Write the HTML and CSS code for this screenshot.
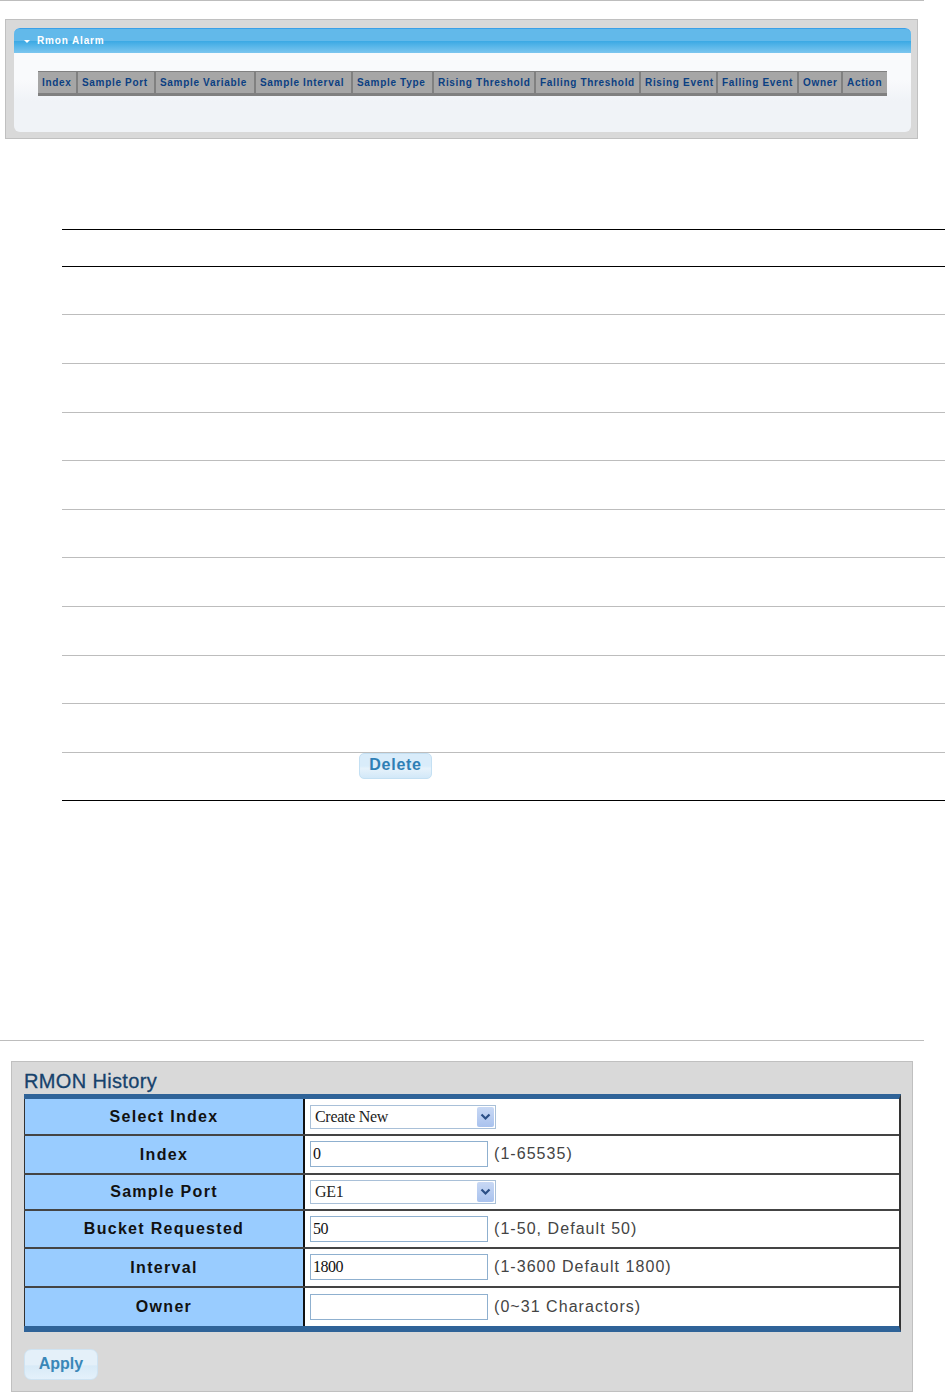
FILE: index.html
```html
<!DOCTYPE html>
<html lang="en">
<head>
<meta charset="utf-8">
<title>RMON</title>
<link rel="stylesheet" href="styles.css">
</head>
<body>
<div class="page">
  <div class="hr"></div>
  <section class="alarm">
    <div class="alarm-inner">
      <div class="alarm-head"><span class="tri"></span><span>Rmon Alarm</span></div>
      <div class="alarm-cols">
        <div>Index</div><div>Sample Port</div><div>Sample Variable</div><div>Sample Interval</div><div>Sample Type</div><div>Rising Threshold</div><div>Falling Threshold</div><div>Rising Event</div><div>Falling Event</div><div>Owner</div><div>Action</div>
      </div>
    </div>
  </section>

  <div class="ruled">
    <div class="ln head"></div>
    <div class="ln dark r48"></div>
    <div class="ln r49"></div>
    <div class="ln r49"></div>
    <div class="ln r48"></div>
    <div class="ln r49"></div>
    <div class="ln r48"></div>
    <div class="ln r49"></div>
    <div class="ln r49"></div>
    <div class="ln r48"></div>
    <div class="ln r49"></div>
    <div class="ln r48 last"><button class="btn-del" type="button">Delete</button></div>
  </div>

  <div class="hr hr2"></div>

  <section class="history">
    <h1>RMON History</h1>
    <div class="form">
      <div class="f-row h1"><div class="lab">Select Index</div><div class="val">
        <div class="sel"><span>Create New</span><span class="arrow"><svg width="15" height="19" viewBox="0 0 15 19"><path d="M3.5 7.5 7.5 11.5 11.5 7.5" fill="none" stroke="#2b4f86" stroke-width="2.2"/></svg></span></div>
      </div></div>
      <div class="f-row h2"><div class="lab">Index</div><div class="val">
        <input class="txt" type="text" value="0"><span class="hint">(1-65535)</span>
      </div></div>
      <div class="f-row h3"><div class="lab">Sample Port</div><div class="val">
        <div class="sel"><span>GE1</span><span class="arrow"><svg width="15" height="19" viewBox="0 0 15 19"><path d="M3.5 7.5 7.5 11.5 11.5 7.5" fill="none" stroke="#2b4f86" stroke-width="2.2"/></svg></span></div>
      </div></div>
      <div class="f-row h2"><div class="lab">Bucket Requested</div><div class="val">
        <input class="txt" type="text" value="50"><span class="hint">(1-50, Default 50)</span>
      </div></div>
      <div class="f-row h2"><div class="lab">Interval</div><div class="val">
        <input class="txt" type="text" value="1800"><span class="hint">(1-3600 Default 1800)</span>
      </div></div>
      <div class="f-row h4 end"><div class="lab">Owner</div><div class="val">
        <input class="txt" type="text" value=""><span class="hint">(0~31 Charactors)</span>
      </div></div>
    </div>
    <button class="btn-apply" type="button">Apply</button>
  </section>
</div>
</body>
</html>
```

FILE: styles.css
```css
html, body { margin: 0; padding: 0; background: #fff; }
body { width: 945px; height: 1392px; overflow: hidden; font-family: "Liberation Sans", Arial, sans-serif; }
.page { display: flex; flex-direction: column; align-items: flex-start; }

.hr { width: 924px; height: 1px; background: #bdbdbd; flex: none; }
.hr2 { margin-top: 239px; }

.alarm { box-sizing: border-box; width: 913px; height: 120px; margin: 18px 0 0 5px; padding: 8px 6px 6px 8px; background: #d9d9d9; border: 1px solid #c0c0c0; }
.alarm-inner { height: 104px; box-sizing: border-box; border-radius: 6px; background: linear-gradient(#f9fafc 0, #f9fafc 50%, #f0f3f7 70%, #f0f3f7 100%); }
.alarm-head { box-sizing: border-box; height: 25px; padding: 0 0 0 10px; display: flex; align-items: flex-start; gap: 7px; border-radius: 6px 6px 0 0; border-top: 1px solid #3aa0e8; background: linear-gradient(#62b9ea 0, #62b9ea 12px, #3aa9e4 12px, #7cc6ef 100%); color: #fff; font-size: 10px; font-weight: bold; letter-spacing: .85px; line-height: 23px; }
.tri { width: 0; height: 0; margin-top: 11px; border-left: 3px solid transparent; border-right: 3px solid transparent; border-top: 3px solid #fff; }
.alarm-cols { display: grid; grid-template-columns: 40px 78px 100px 97px 81px 102px 105px 77px 81px 44px 44px; width: 849px; box-sizing: border-box; margin: 18px 0 0 24px; background: #808080; border-top: 1px solid #808080; border-bottom: 3px solid #808080; }
.alarm-cols > div { box-sizing: border-box; height: 21px; padding-left: 4px; background: #a6a6a6; border-right: 2px solid #808080; color: #0b3f82; font-size: 10px; font-weight: bold; letter-spacing: .68px; line-height: 21px; white-space: nowrap; overflow: hidden; }
.alarm-cols > div:first-child { border-left: 0; }
.alarm-cols > div:last-child { border-right: 0; }

.ruled { width: 883px; margin: 90px 0 0 62px; }
.ln { box-sizing: border-box; border-top: 1px solid #bdbdbd; }
.head { height: 37px; border-top-color: #000; }
.dark { border-top-color: #000; }
.r48 { height: 48px; }
.r49 { height: 49px; }
.last { height: 49px; border-bottom: 1px solid #000; padding-left: 297px; }

.btn-del { display: block; box-sizing: border-box; width: 73px; height: 26px; padding: 0 0 2px; border: 1px solid #c4e0f3; border-radius: 5px; background: linear-gradient(#d9ecfa 0, #d9ecfa 50%, #e6f2fb 60%, #d2e8f8 100%); color: #2f7fb5; font: bold 16px/22px "Liberation Sans", Arial, sans-serif; letter-spacing: .75px; }

.history { box-sizing: border-box; width: 902px; height: 331px; margin: 20px 0 0 11px; padding: 0 0 0 12px; background: #d9d9d9; border: 1px solid #c0c0c0; }
.history h1 { margin: 0; height: 32px; font-size: 20px; font-weight: normal; line-height: 38px; color: #16426c; letter-spacing: .35px; -webkit-text-stroke: .3px #16426c; white-space: nowrap; }
.form { width: 877px; box-sizing: border-box; background: #fff; border-top: 5px solid #2f6398; border-bottom: 6px solid #2f6398; border-right: 2px solid #333; }
.f-row { display: grid; grid-template-columns: 281px 1fr; box-sizing: border-box; border-bottom: 2px solid #444; }
.f-row.end { border-bottom: 0; }
.h1 { height: 37px; }
.h2 { height: 38.5px; }
.h3 { height: 36px; }
.h4 { height: 38px; }
.lab { display: flex; align-items: center; justify-content: center; padding-top: 1px; background: #99ccff; border-left: 1px solid #333; border-right: 2px solid #111; color: #111; font-size: 16px; font-weight: bold; letter-spacing: 1.3px; white-space: nowrap; }
.val { display: flex; align-items: center; padding-left: 5px; gap: 6px; }

.txt { box-sizing: border-box; width: 178px; height: 26px; padding: 0 0 0 2px; margin: 0; border: 1.5px solid #8fb0cf; background: #fff; color: #111; font: 16px "Liberation Serif", "Times New Roman", serif; letter-spacing: -.5px; outline: none; }
.hint { color: #444; font-size: 16px; letter-spacing: 1.05px; white-space: nowrap; }

.sel { box-sizing: border-box; display: flex; align-items: center; justify-content: space-between; width: 186px; height: 24px; padding: 0 1px 0 4px; border: 1.5px solid #a9c0d8; background: #fff; color: #222; font: 16px "Liberation Serif", "Times New Roman", serif; letter-spacing: -.3px; }
.arrow { display: flex; width: 17px; height: 20px; align-items: center; justify-content: center; background: linear-gradient(#c8d8f4, #a9c2ee); border-radius: 2px; }

.btn-apply { display: block; box-sizing: border-box; width: 74px; height: 31px; margin-top: 17.5px; padding: 0 0 1px; border: 1.5px solid #cfe3f2; border-radius: 7px; background: linear-gradient(#e4f0f9 0, #e4f0f9 50%, #d8eaf7 55%, #e4f1fb 100%); color: #3a87b8; font: bold 16px/26px "Liberation Sans", Arial, sans-serif; }
```
